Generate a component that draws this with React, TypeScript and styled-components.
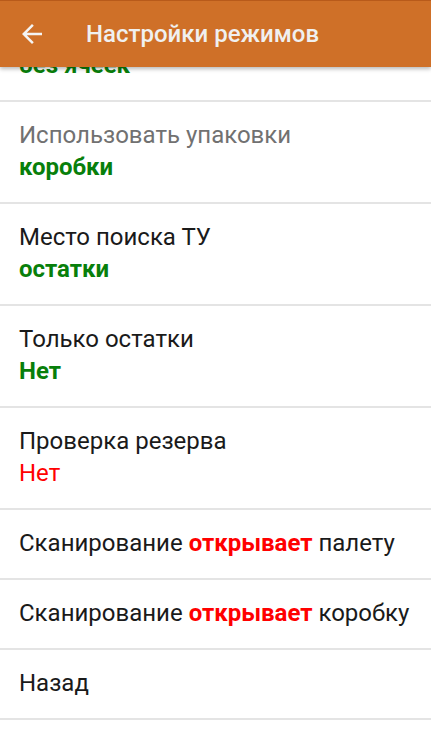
import { useLayoutEffect, useRef } from "react";
import styled, { createGlobalStyle } from "styled-components";

const GlobalStyle = createGlobalStyle`
  html, body {
    margin: 0;
    padding: 0;
    height: 100%;
    overflow: hidden;
    background: #fff;
  }
  * {
    box-sizing: border-box;
  }
`;

const Screen = styled.div`
  position: relative;
  width: 431px;
  height: 740px;
  font-family: Roboto, "Noto Sans", Arial, sans-serif;
  background: #fff;
  overflow: hidden;
`;

const Toolbar = styled.div`
  position: absolute;
  top: 0;
  left: 0;
  right: 0;
  height: 67px;
  display: flex;
  align-items: center;
  padding-left: 17px;
  background: #cf7028;
  border-top: 1px solid #b85a1a;
  box-shadow: 0 2px 4px rgba(0, 0, 0, 0.28);
  z-index: 2;
`;

const BackButton = styled.span`
  display: flex;
  width: 30px;
  height: 30px;
  color: #f4f4f4;
`;

const Title = styled.h1`
  margin: 0 0 0 39px;
  font-size: 24px;
  font-weight: 500;
  color: #f0f0f0;
`;

const Scroller = styled.div`
  height: 740px;
  overflow-y: scroll;
  scrollbar-width: none;
  padding-top: 67px;
  padding-bottom: 40px;
  &::-webkit-scrollbar {
    display: none;
  }
`;

const Row = styled.div<{ $single?: boolean }>`
  height: ${(p) => (p.$single ? 70 : 102)}px;
  display: flex;
  flex-direction: column;
  justify-content: center;
  padding: 0 19px 2px;
  border-bottom: 2px solid #e4e4e4;
`;

const Label = styled.div<{ $disabled?: boolean }>`
  font-size: 24px;
  line-height: 32px;
  color: ${(p) => (p.$disabled ? "#717171" : "#1a1a1a")};
  white-space: nowrap;
`;

const Value = styled.div<{ $color: string; $bold?: boolean }>`
  font-size: 24px;
  line-height: 32px;
  font-weight: ${(p) => (p.$bold ? 700 : 400)};
  color: ${(p) => p.$color};
`;

const Accent = styled.b`
  color: #ff0000;
  font-weight: 700;
`;

const GREEN = "#087f0b";
const RED = "#ff0000";

const settings = [
  { label: "Режим работы с ячейками", value: "без ячеек", color: GREEN, bold: true },
  { label: "Использовать упаковки", value: "коробки", color: GREEN, bold: true, disabled: true },
  { label: "Место поиска ТУ", value: "остатки", color: GREEN, bold: true },
  { label: "Только остатки", value: "Нет", color: GREEN, bold: true },
  { label: "Проверка резерва", value: "Нет", color: RED, bold: false },
];

export default function App() {
  const scroller = useRef<HTMLDivElement>(null);

  useLayoutEffect(() => {
    if (scroller.current) scroller.current.scrollTop = 67;
  }, []);

  return (
    <>
      <GlobalStyle />
      <Screen>
        <Toolbar>
          <BackButton>
            <svg viewBox="0 0 24 24" width="30" height="30" fill="currentColor">
              <path d="M20 11H7.83l5.59-5.59L12 4l-8 8 8 8 1.41-1.41L7.83 13H20v-2z" />
            </svg>
          </BackButton>
          <Title>Настройки режимов</Title>
        </Toolbar>
        <Scroller ref={scroller}>
          {settings.map((s) => (
            <Row key={s.label}>
              <Label $disabled={s.disabled}>{s.label}</Label>
              <Value $color={s.color} $bold={s.bold}>
                {s.value}
              </Value>
            </Row>
          ))}
          <Row $single>
            <Label>
              Сканирование <Accent>открывает</Accent> палету
            </Label>
          </Row>
          <Row $single>
            <Label>
              Сканирование <Accent>открывает</Accent> коробку
            </Label>
          </Row>
          <Row $single>
            <Label>Назад</Label>
          </Row>
        </Scroller>
      </Screen>
    </>
  );
}
